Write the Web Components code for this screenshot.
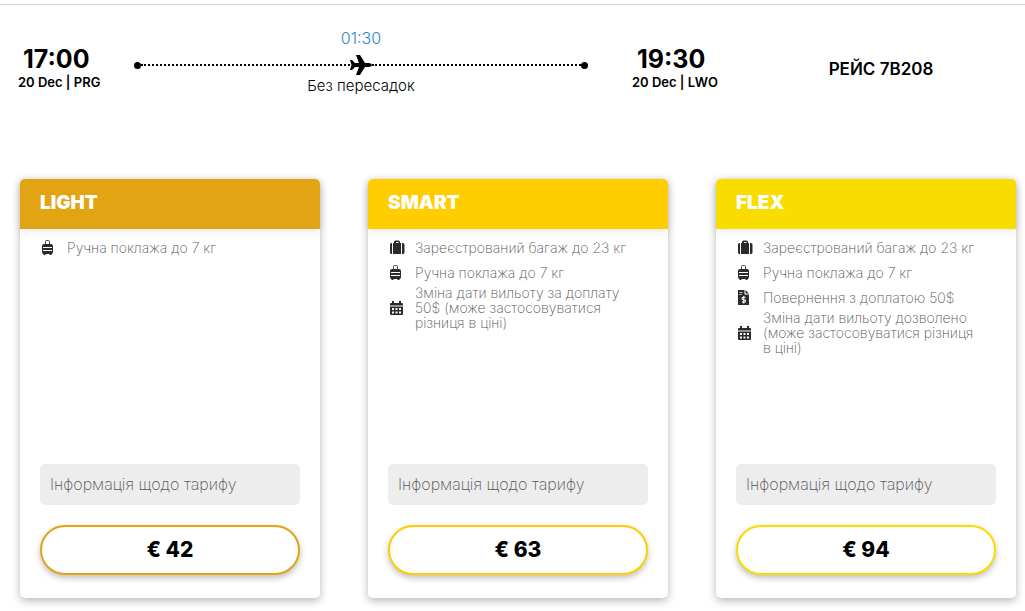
<!DOCTYPE html>
<html lang="uk">
<head>
<meta charset="utf-8">
<meta name="viewport" content="width=device-width, initial-scale=1">
<title>Рейс 7B208</title>
<style>
  body { margin: 0; background: #fff; color: #000; font-family: Inter, "Open Sans", sans-serif; }
</style>
</head>
<body>
<flight-page>
  <flight-summary slot="summary">
    <flight-stop slot="from" time="17:00">20 Dec | PRG</flight-stop>
    <flight-route slot="route" duration="01:30">Без пересадок</flight-route>
    <flight-stop slot="to" time="19:30">20 Dec | LWO</flight-stop>
    <span slot="number">РЕЙС 7B208</span>
  </flight-summary>
  <fare-card name="LIGHT" price="€ 42" style="--fare: #e2a413">
    <fare-feature icon="cabin">Ручна поклажа до 7 кг</fare-feature>
  </fare-card>
  <fare-card name="SMART" price="€ 63" style="--fare: #ffcd00">
    <fare-feature icon="case">Зареєстрований багаж до 23 кг</fare-feature>
    <fare-feature icon="cabin">Ручна поклажа до 7 кг</fare-feature>
    <fare-feature icon="calendar">Зміна дати вильоту за доплату 50$ (може застосовуватися різниця в ціні)</fare-feature>
  </fare-card>
  <fare-card name="FLEX" price="€ 94" style="--fare: #f9dd00">
    <fare-feature icon="case">Зареєстрований багаж до 23 кг</fare-feature>
    <fare-feature icon="cabin">Ручна поклажа до 7 кг</fare-feature>
    <fare-feature icon="refund">Повернення з доплатою 50$</fare-feature>
    <fare-feature icon="calendar">Зміна дати вильоту дозволено (може застосовуватися різниця в ціні)</fare-feature>
  </fare-card>
</flight-page>
<script>
const icons = {
  cabin: '<svg viewBox="0 0 16 16" fill="none"><path d="M4.500 5V1.500q0-1 1-1h2q1 0 1 1V5" stroke="#444"/><path fill="#2b2b2b" d="M3 4h7q2 0 2 2v1H1V6q0-2 2-2zM1 7h1v4H1zm10 0h1v4h-1zM1 8h11v2H1zM1 11h11v1q0 2-1.500 2v1H8.500v-1h-4v1H2.500v-1Q1 14 1 12z"/></svg>',
  case: '<svg viewBox="0 0 16 16"><path fill="#2b2b2b" d="M3 3v11H2.500Q1 14 1 12.500v-8Q1 3 2.500 3zM4 3h1V2q0-1.500 1.500-1.500h3Q11 .5 11 2v1h1v11H4zm3 0h2.500V2H7zM13 3h.5Q15.500 3 15.500 4.500v8q0 1.500-1.500 1.500h-1z"/></svg>',
  calendar: '<svg viewBox="0 0 16 16"><path fill="#2b2b2b" d="M3 1h2v2h5V1h2v2h1q1 0 1 1v1.500H1V4q0-1 1-1h1zM1 6.500h13V14q0 1-1 1H2q-1 0-1-1zM3 8v2h2V8zm3.500 0v2h2V8zM10 8v2h2V8zm-7 3.500v2h2v-2zm3.500 0v2h2v-2zm3.500 0v2h2v-2z" fill-rule="evenodd"/></svg>',
  refund: '<svg viewBox="0 0 16 16" fill="none"><path fill="#2b2b2b" d="M1 0h6.500v4.500H12V15H1zM8.500 0 12 3.500H8.500z"/><path d="M2.500 2.500h3M2.500 4.500h2" stroke="#ddd" stroke-width=".9"/><path d="M8.500 7.300H6.300Q5 7.300 5 8.500t1.300 1.200h.9Q8.500 9.700 8.500 10.900t-1.300 1.200H5M6.750 6v7.500" stroke="#fff" stroke-width="1.100"/></svg>'
};

function define(name, render) {
  customElements.define(name, class extends HTMLElement {
    connectedCallback() {
      if (this.shadowRoot) return;
      const template = document.createElement('template');
      template.innerHTML = render(this);
      this.attachShadow({ mode: 'open' }).append(template.content.cloneNode(true));
    }
  });
}

define('flight-page', () => `
  <style>
    :host { display: block; padding-top: 4px; }
    main { display: grid; grid-template-columns: repeat(auto-fit, minmax(260px, 1fr)); gap: 48px; padding: 67px 9px 13px 20px; }
  </style>
  <slot name="summary"></slot>
  <main><slot></slot></main>`);

define('flight-summary', () => `
  <style>
    :host { display: grid; grid-template-columns: 116fr 454fr 149fr 288fr; align-items: center; padding: 21px 0 0 18px; border-top: 1px solid #d3d3d3; }
    .to { padding-left: 44px; }
    .number { text-align: center; font-size: 17px; line-height: 20px; font-weight: 600; }
  </style>
  <slot name="from"></slot>
  <slot name="route"></slot>
  <div class="to"><slot name="to"></slot></div>
  <div class="number"><slot name="number"></slot></div>`);

define('flight-stop', el => `
  <style>
    :host { display: block; white-space: nowrap; }
    time { display: block; padding-left: 5px; font-size: 25px; line-height: 26px; font-weight: 700; }
    div { font-size: 13px; line-height: 20px; font-weight: 600; }
  </style>
  <time>${el.getAttribute('time')}</time>
  <div><slot></slot></div>`);

define('flight-route', el => `
  <style>
    :host { display: block; padding-bottom: 16px; text-align: center; }
    .duration { font-size: 16px; line-height: 24px; font-weight: 300; color: #2f83d2; }
    .track { display: flex; align-items: center; margin-top: 4px; }
    .track i { width: 7px; height: 7px; border-radius: 50%; background: #000; }
    .track span { flex: 1; border-top: 2px dotted #000; }
    svg { display: block; width: 22px; height: 22px; }
    .caption { font-size: 15px; line-height: 20px; font-weight: 300; }
  </style>
  <div class="duration">${el.getAttribute('duration')}</div>
  <div class="track"><i></i><span></span>
    <svg viewBox="0 0 22 22" aria-hidden="true"><path d="M0 6h2l3 3h4L6 1h4l5 8h4q3 .5 3 2t-3 2h-4l-5 8H6l3-8H5l-3 3H0l1.500-5z"/></svg>
    <span></span><i></i></div>
  <div class="caption"><slot></slot></div>`);

define('fare-card', el => `
  <style>
    :host { display: flex; flex-direction: column; border-radius: 5px; background: #fff; box-shadow: 0 3px 8px rgba(0, 0, 0, .28); }
    h2 { margin: 0; padding: 0 20px 2px; border-radius: 5px 5px 0 0; background: var(--fare); color: #fff; font-size: 19px; line-height: 48px; font-weight: 900; box-shadow: 0 1px 8px rgba(0, 0, 0, .12); }
    .features { flex: 1; min-height: 229px; padding: 6px 20px 0; }
    .actions { display: grid; gap: 20px; padding: 0 20px 23px; }
    button { box-sizing: border-box; margin: 0; font-family: inherit; cursor: pointer; }
    .info { border: 0; border-radius: 5px; padding: 10px; background: #ededed; color: #555; text-align: left; font-size: 16px; line-height: 21px; font-weight: 200; }
    .price { border: 2px solid var(--fare); border-radius: 25px; padding: 12px; background: #fff; color: #000; font-size: 21px; line-height: 22px; font-weight: 800; box-shadow: 0 3px 6px rgba(0, 0, 0, .25); }
  </style>
  <h2>${el.getAttribute('name')}</h2>
  <div class="features" role="list"><slot></slot></div>
  <div class="actions">
    <button class="info" type="button">Інформація щодо тарифу</button>
    <button class="price" type="button">${el.getAttribute('price')}</button>
  </div>`);

define('fare-feature', el => `
  <style>
    :host { display: flex; align-items: center; gap: 10px; min-height: 25px; padding: 0 16px 0 1px; color: #555; font-size: 14px; line-height: 15px; font-weight: 200; }
    svg { display: block; flex: none; width: 16px; height: 16px; }
  </style>
  ${icons[el.getAttribute('icon')]}
  <div><slot></slot></div>`);

document.querySelectorAll('fare-feature').forEach(el => el.setAttribute('role', 'listitem'));
</script>
</body>
</html>
